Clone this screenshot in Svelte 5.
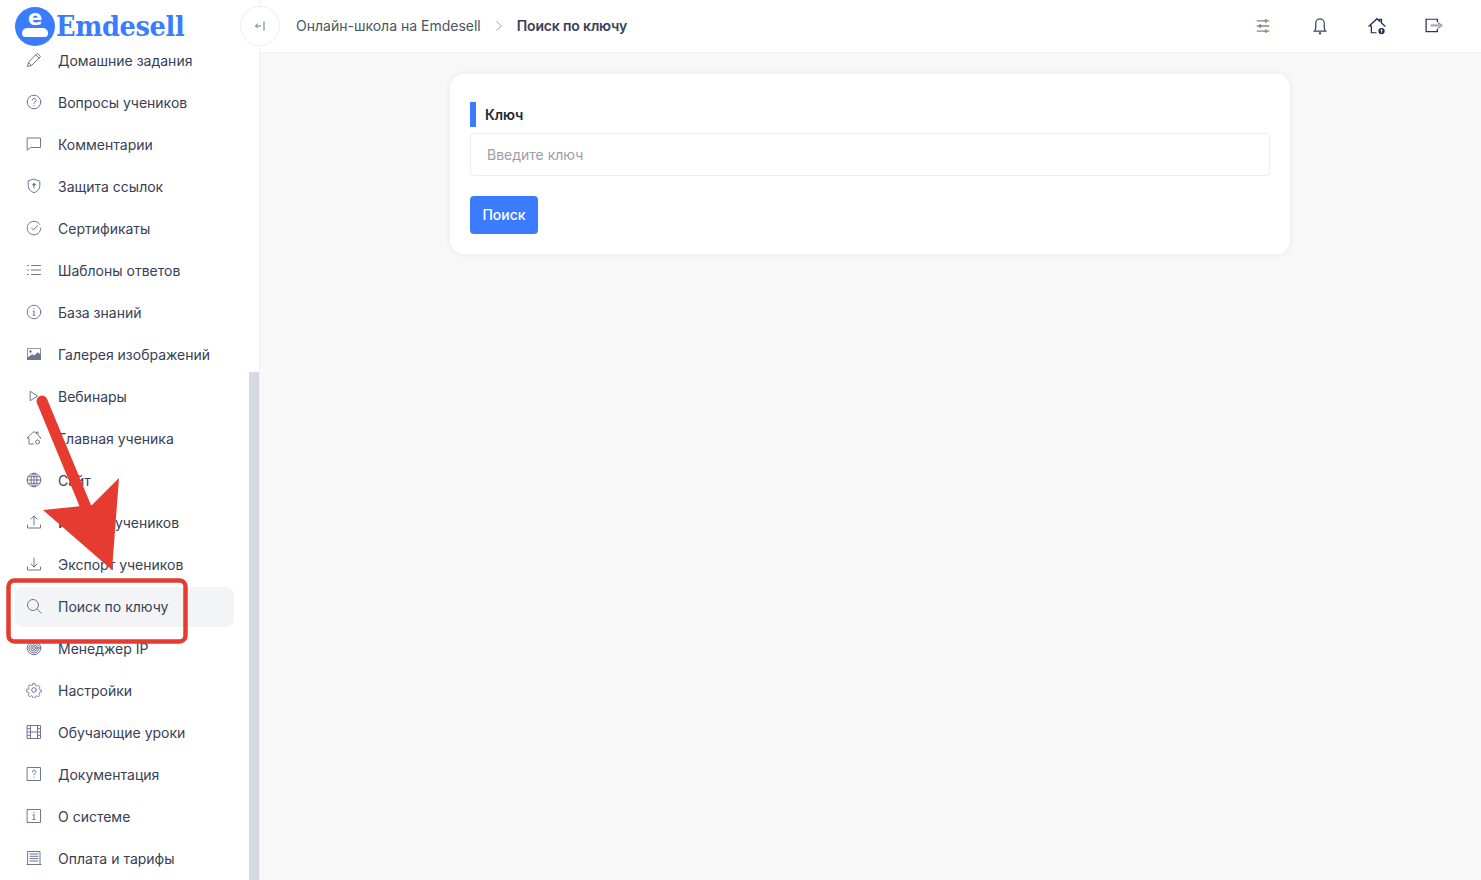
<script>
  const items = [
    ['Домашние задания', 'pencil'], ['Вопросы учеников', 'help'], ['Комментарии', 'chat'],
    ['Защита ссылок', 'shield'], ['Сертификаты', 'check'], ['Шаблоны ответов', 'list'],
    ['База знаний', 'info'], ['Галерея изображений', 'image'], ['Вебинары', 'play'],
    ['Главная ученика', 'home'], ['Сайт', 'globe'], ['Импорт учеников', 'upload'],
    ['Экспорт учеников', 'download'], ['Поиск по ключу', 'search'], ['Менеджер IP', 'target'],
    ['Настройки', 'gear'], ['Обучающие уроки', 'film'], ['Документация', 'docq'],
    ['О системе', 'doci'], ['Оплата и тарифы', 'bill']
  ];
  const active = 'Поиск по ключу';
</script>

{#snippet icon(name)}
  <svg class="ico" viewBox="0 0 16 16" fill="none" stroke="currentColor" stroke-width="1" stroke-linecap="round" stroke-linejoin="round">
    {#if name === 'pencil'}
      <path d="M11.500 1.500l3 3L5.500 13.500l-4 1 1-4zM10 3l3 3M2.500 10.500l3 3" />
    {:else if name === 'help'}
      <circle cx="8" cy="8" r="6.800" /><path d="M6.200 6.200a1.900 1.900 0 1 1 2.800 1.700c-.7.400-1 .8-1 1.500" /><path d="M8 11.400v.2" />
    {:else if name === 'chat'}
      <path d="M1.500 2h13v9.500H4.500l-3 2.500z" />
    {:else if name === 'shield'}
      <path d="M8 1.200l5.800 2v4.500c0 3.400-2.400 5.800-5.800 7-3.400-1.200-5.800-3.600-5.800-7V3.200z" /><circle cx="8" cy="6.600" r="1.100" fill="currentColor" /><path d="M8 7.500v2.500" />
    {:else if name === 'check'}
      <path d="M13.800 4.500A6.800 6.800 0 1 0 14.800 8" /><path d="M5.500 8l2 2 4-4.500" />
    {:else if name === 'list'}
      <path d="M5.500 3.500h9M5.500 8h9M5.500 12.500h9" /><path d="M1.500 3.500h1M1.500 8h1M1.500 12.500h1" />
    {:else if name === 'info'}
      <circle cx="8" cy="8" r="6.800" /><path d="M8 7.200v4M7.200 7.200H8M7.200 11.200h1.600M8 4.600v.2" />
    {:else if name === 'image'}
      <rect x="1" y="2" width="14" height="12" rx="0.500" fill="currentColor" stroke="none" />
      <path d="M1.800 2.800h12.400v5.400l-2.500-2-3.500 3.300-2-1.300-4.400 3z" fill="#fff" stroke="none" /><circle cx="4.500" cy="5.500" r="1.200" fill="currentColor" stroke="none" />
    {:else if name === 'play'}
      <path d="M4.500 3.500l7 4.500-7 4.500z" />
    {:else if name === 'home'}
      <path d="M7.500 14H3V8H1l7-6.500 2.500 2.300V2h1.500v3.300L15 8h-1" /><circle cx="11.500" cy="12" r="2" />
    {:else if name === 'globe'}
      <circle cx="8" cy="8" r="6.800" /><ellipse cx="8" cy="8" rx="3" ry="6.800" /><path d="M1.200 8h13.600M2 4.700h12M2 11.300h12M8 1.200v13.600" />
    {:else if name === 'upload'}
      <path d="M1.500 11v3h13v-3M8 11V2M5 5l3-3 3 3" />
    {:else if name === 'download'}
      <path d="M1.500 11v3h13v-3M8 2v9M5 8l3 3 3-3" />
    {:else if name === 'search'}
      <circle cx="7" cy="7" r="5.500" /><path d="M11 11l4 4" />
    {:else if name === 'target'}
      <circle cx="8" cy="8" r="6.800" /><circle cx="8" cy="8" r="5" /><circle cx="8" cy="8" r="3.200" /><circle cx="8" cy="8" r="1.500" />
    {:else if name === 'gear'}
      <path d="M6.800 1h2.400l.4 2 1.500.7 1.800-1.100 1.600 1.700-1.100 1.700.7 1.600 2 .3v2.300l-2 .4-.7 1.500 1.100 1.800-1.600 1.600-1.800-1.100-1.500.7-.4 2H6.800l-.4-2-1.500-.7-1.800 1.100-1.600-1.600 1.100-1.800-.7-1.500-2-.4V7.400l2-.3.7-1.600L1.500 3.800l1.600-1.700 1.800 1.100 1.500-.7z" transform="translate(.8 .8) scale(.9)" /><circle cx="8" cy="8" r="2.300" />
    {:else if name === 'film'}
      <rect x="1.500" y="1.500" width="13" height="13" /><path d="M4.500 1.500v13M11.500 1.500v13M1.500 8h13M1.500 4.700h3M1.500 11.300h3M11.500 4.700h3M11.500 11.300h3" />
    {:else if name === 'docq'}
      <rect x="1.500" y="1.500" width="13" height="13" /><path d="M6.400 6a1.700 1.700 0 1 1 2.500 1.500c-.6.400-.9.700-.9 1.300M8 11v.2" />
    {:else if name === 'doci'}
      <rect x="1.500" y="1.500" width="13" height="13" /><path d="M8 7v4.500M7 7h1M7 11.500h2M8 4.400v.2" />
    {:else if name === 'bill'}
      <path d="M2 1.500h12v13H2zM4 4h8M4 6.300h8M4 8.600h8M4 11h8" /><path d="M1 14.500h14" />
    {/if}
  </svg>
{/snippet}

<div class="page">
  <aside class="sidebar">
    <div class="brand">
      <svg class="mark" viewBox="0 0 40 39">
        <ellipse cx="20" cy="19.500" rx="20" ry="19.500" fill="#3b7cff" />
        <path d="M7 26c0-3 2.500-5 6-5h14c3.500 0 6 2 6 5 0 2.500-1 4-3 4H10c-2 0-3-1.500-3-4z" fill="#fff" />
        <text x="20" y="18" text-anchor="middle" class="mark-e">e</text>
      </svg>
      <span class="word">Emdesell</span>
    </div>
    <div class="side-body">
      <nav class="nav">
        {#each items as [label, ic]}
          <a class="item" class:active={label === active} href="#top">
            {@render icon(ic)}
            <span>{label}</span>
          </a>
        {/each}
      </nav>
      <div class="thumb-track"><div class="thumb"></div></div>
    </div>
  </aside>

  <div class="right">
    <header class="topbar">
      <button class="collapse" aria-label="Свернуть">
        <svg viewBox="0 0 12 12" width="12" height="12" fill="none" stroke="#6b7280" stroke-width="1"><path d="M7 6H1.500M3.800 3.800L1.500 6l2.300 2.200M10 1.500v9" /></svg>
      </button>
      <div class="crumbs">
        <span>Онлайн-школа на Emdesell</span>
        <svg viewBox="0 0 8 12" width="8" height="12" fill="none" stroke="#9ca3af" stroke-width="1"><path d="M1.500 1.500L6.500 6l-5 4.500" /></svg>
        <strong>Поиск по ключу</strong>
      </div>
      <div class="actions">
        <svg viewBox="0 0 16 16" fill="none" stroke="#7d8594" stroke-width="1.200"><path d="M2.500 3.500h11M2.500 8h11M2.500 12.500h11" /><path d="M10.500 2v3M5.500 6.500v3M10.500 11v3" stroke="#a9813f" stroke-width="1.600" /></svg>
        <svg viewBox="0 0 16 16" fill="none" stroke="#3a4560" stroke-width="1.100"><path d="M3 12.500c.7-.8 1.200-1.500 1.200-3V5.500a3.800 3.800 0 0 1 7.600 0v4c0 1.500.5 2.200 1.200 3z" /><path d="M7 14.500h2" stroke-width="1.800" /></svg>
        <svg viewBox="0 0 16 16" fill="none" stroke="#1e2a55" stroke-width="1.100"><path d="M7.500 14H3V8H1l7-6.500 2.500 2.300V2h1.500v3.300L15 8h-1" /><circle cx="12" cy="12.500" r="2.800" fill="#1e2a55" stroke="none" /><path d="M12 14v-3M11 12l1-1 1 1" stroke="#fff" stroke-width="0.800" /></svg>
        <svg viewBox="0 0 16 16" fill="none" stroke="#2b2f6b" stroke-width="1.100"><path d="M11 4.500V2H1v11h10v-2.500" /><path d="M5 7.500h8" stroke="#9ca3af" stroke-width="1.800" /><path d="M11.500 5l3.500 2.500-3.500 2.500" stroke="#8a8fa0" /></svg>
      </div>
    </header>

    <main class="content">
      <section class="card">
        <div class="label"><span>Ключ</span></div>
        <input class="field" placeholder="Введите ключ" />
        <button class="go">Поиск</button>
      </section>
    </main>
  </div>

  <svg class="annot" viewBox="0 0 260 660" width="260" height="660" aria-hidden="true">
    <path d="M42 401L92 522" stroke="#e63b30" stroke-width="11" stroke-linecap="round" fill="none" />
    <polygon points="43,510 92,505 119,478 112,570" fill="#e63b30" />
    <rect x="8.500" y="580.500" width="177" height="61" rx="6" fill="none" stroke="#e63b30" stroke-width="4.500" />
  </svg>
</div>

<style>
  :global(body) {
    margin: 0;
    font-family: Inter, "Liberation Sans", sans-serif;
    background: #f8f8f9;
  }
  .page {
    position: relative;
    display: flex;
    width: 1481px;
    height: 880px;
    overflow: hidden;
  }
  .sidebar {
    width: 259px;
    flex: none;
    display: flex;
    flex-direction: column;
    background: #fff;
    border-right: 1px solid #f0f0f4;
  }
  .brand {
    height: 41px;
    flex: none;
    display: flex;
    align-items: flex-start;
    gap: 1px;
    padding: 7px 0 0 15px;
    box-sizing: border-box;
    position: relative;
    z-index: 1;
  }
  .mark {
    width: 40px;
    height: 39px;
    flex: none;
  }
  .mark-e {
    font: 700 21px "DejaVu Sans", sans-serif;
    fill: #fff;
  }
  .word {
    font: 700 28.500px/38px "DejaVu Serif Condensed", "DejaVu Serif", serif;
    font-stretch: condensed;
    color: #3b7cff;
    letter-spacing: -0.350px;
  }
  .side-body {
    flex: 1;
    min-height: 0;
    display: flex;
  }
  .nav {
    width: 249px;
    flex: none;
    box-sizing: border-box;
    padding: 0 15px;
    overflow: hidden;
    display: flex;
    flex-direction: column;
    gap: 2px;
  }
  .item {
    flex: none;
    height: 40px;
    box-sizing: border-box;
    padding: 0 0 2px 11px;
    display: flex;
    align-items: center;
    gap: 16px;
    border-radius: 8px;
    color: #374056;
    font-size: 14px;
    text-decoration: none;
  }
  .item.active {
    background: #f3f4f6;
  }
  .ico {
    width: 16px;
    height: 16px;
    flex: none;
    color: #6f7690;
  }
  .thumb-track {
    width: 10px;
    flex: none;
  }
  .thumb {
    height: 508px;
    margin-top: 331px;
    background: #d5d9e3;
  }
  .right {
    flex: 1;
    min-width: 0;
    display: flex;
    flex-direction: column;
  }
  .topbar {
    height: 53px;
    flex: none;
    box-sizing: border-box;
    display: flex;
    align-items: center;
    background: #fff;
    border-bottom: 1px solid #f0f0f4;
    padding: 0 38px 0 0;
  }
  .collapse {
    width: 40px;
    height: 40px;
    margin: -1px 0 0 -20px;
    flex: none;
    padding: 0;
    display: flex;
    align-items: center;
    justify-content: center;
    border: 1px solid #eeeef4;
    border-radius: 50%;
    background: #fff;
    position: relative;
    z-index: 1;
  }
  .crumbs {
    margin: -1px 0 0 16px;
    flex: 1;
    display: flex;
    align-items: center;
    gap: 14px;
    font-size: 14px;
    color: #4b5563;
  }
  .crumbs strong {
    font-weight: 600;
    color: #374056;
    letter-spacing: -0.150px;
  }
  .actions {
    display: flex;
    gap: 39px;
  }
  .actions svg {
    width: 18px;
    height: 18px;
  }
  .content {
    flex: 1;
    display: flex;
    justify-content: center;
    padding: 21px 2px 0 0;
    align-items: flex-start;
  }
  .card {
    width: 840px;
    height: 180px;
    box-sizing: border-box;
    padding: 28px 20px 0;
    background: #fff;
    border-radius: 14px;
    box-shadow: 0 0 6px rgba(30, 40, 70, 0.08);
    display: flex;
    flex-direction: column;
    align-items: flex-start;
  }
  .label {
    height: 25px;
    border-left: 6px solid #3b7cff;
    padding-left: 9.500px;
    font-size: 14px;
    font-weight: 600;
    line-height: 25px;
    color: #1f2937;
    letter-spacing: -0.100px;
  }
  .field {
    width: 100%;
    height: 43px;
    margin-top: 6px;
    box-sizing: border-box;
    padding: 0 16px 0 16.500px;
    border: 1px solid #eceef4;
    border-radius: 4px;
    font: 14px Inter, sans-serif;
    background: #fff;
    outline: none;
  }
  .field::placeholder {
    color: #9a9ea6;
    opacity: 1;
  }
  .go {
    margin-top: 20px;
    width: 68px;
    height: 38px;
    border: 0;
    border-radius: 4px;
    background: #3b7cff;
    color: #fff;
    font: 500 14px Inter, sans-serif;
    padding: 0 0 1px 1px;
  }
  .annot {
    position: absolute;
    left: 0;
    top: 0;
    pointer-events: none;
    z-index: 2;
  }
</style>
